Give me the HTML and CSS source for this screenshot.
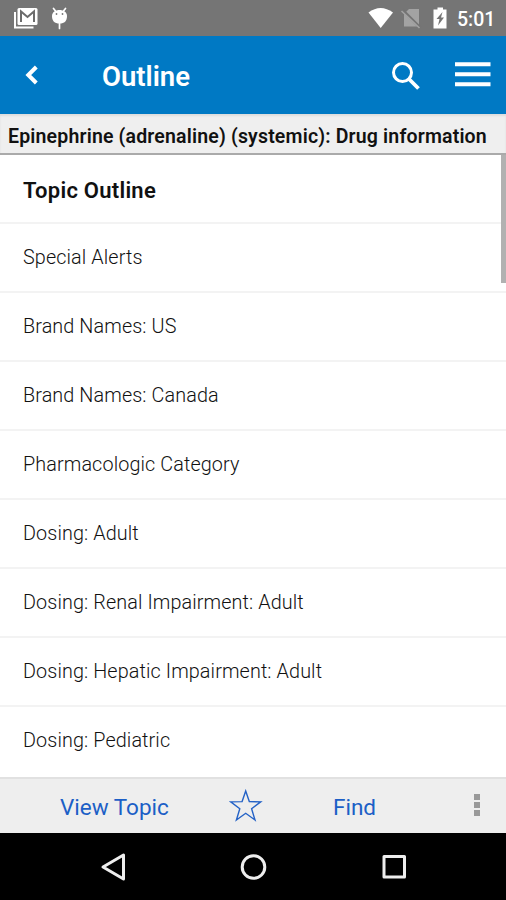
FILE: index.html
```html
<!DOCTYPE html>
<html lang="en">
<head>
<meta charset="utf-8">
<title>Outline</title>
<link rel="stylesheet" href="styles.css">
</head>
<body>
<div class="screen">
  <div class="status">
    <svg class="status-left" width="60" height="36" viewBox="0 0 60 36">
      <path d="M1 12v15.500h18.500" fill="none" stroke="#fff" stroke-width="2"/>
      <rect x="3.500" y="8" width="20" height="17" rx="1.500" fill="#fff"/>
      <path d="M7 22V11.500l6.500 5.500 6.500-5.500V22" fill="none" stroke="#6c6c6c" stroke-width="2"/>
      <path d="M39.500 8.500l2 2.500M51.500 8.500l-2 2.500M45.500 23v5.500" stroke="#fff" stroke-width="1.700" stroke-linecap="round"/>
      <path d="M38 16c0-8 15-8 15 0 0 5-2.500 7.500-7.500 7.500s-7.500-2.500-7.500-7.500z" fill="#fff"/>
      <circle cx="42.500" cy="14" r=".9" fill="#777"/><circle cx="48.500" cy="14" r=".9" fill="#777"/>
    </svg>
    <svg class="status-right" width="86" height="36" viewBox="0 0 86 36">
      <path d="M1.500 12.500Q13.500 3.500 26 12.500L13.700 28z" fill="#fff"/>
      <path d="M42 9h10v17.500H37V14z" fill="#a3a3a3"/>
      <path d="M35 9.500l18.500 18.500" stroke="#747474" stroke-width="3"/>
      <path d="M34.500 11l18 17" stroke="#a3a3a3" stroke-width="1.600"/>
      <path d="M70.500 7.500h5.500v2h3.500v19h-13v-19h4z" fill="#fff"/>
      <path d="M75.500 12l-6 7h3l-1.500 6.500 6-8h-3z" fill="#747474"/>
    </svg>
    <span class="clock">5:01</span>
  </div>
  <header class="appbar">
    <svg class="back" width="14" height="20" viewBox="0 0 14 20"><path d="M12.300 2L4.300 10l8 8" fill="none" stroke="#fff" stroke-width="4"/></svg>
    <h1>Outline</h1>
    <svg class="search" width="30" height="30" viewBox="0 0 30 30"><circle cx="11.500" cy="11.500" r="9" fill="none" stroke="#fff" stroke-width="3"/><path d="M18 18l9.500 9.500" stroke="#fff" stroke-width="3.800"/></svg>
    <svg class="menu" width="36" height="26" viewBox="0 0 36 26"><path d="M0 3.300h35.500M0 13.300h35.500M0 23.300h35.500" stroke="#fff" stroke-width="4"/></svg>
  </header>
  <div class="topic"><span>Epinephrine (adrenaline) (systemic): Drug information</span></div>
  <main class="list">
    <h2 class="row heading"><span>Topic Outline</span></h2>
    <div class="row"><span>Special Alerts</span></div>
    <div class="row"><span>Brand Names: US</span></div>
    <div class="row"><span>Brand Names: Canada</span></div>
    <div class="row"><span>Pharmacologic Category</span></div>
    <div class="row"><span>Dosing: Adult</span></div>
    <div class="row"><span>Dosing: Renal Impairment: Adult</span></div>
    <div class="row"><span>Dosing: Hepatic Impairment: Adult</span></div>
    <div class="row"><span>Dosing: Pediatric</span></div>
    <div class="scrollbar"></div>
  </main>
  <footer class="toolbar">
    <span class="view">View Topic</span>
    <svg class="star" width="34" height="34" viewBox="0 0 34 34"><path d="M16.700 2l3.600 10.600 11.400.2-9.100 6.900 3.400 11.300-9.300-6.700-9.300 6.700 3.400-11.300L1.700 12.800l11.400-.2z" fill="none" stroke="#2462c6" stroke-width="1.400"/></svg>
    <span class="find">Find</span>
    <svg class="more" width="6" height="22" viewBox="0 0 6 22"><path d="M0 0h6v6H0zM0 8h6v6H0zM0 16h6v6H0z" fill="#999"/></svg>
  </footer>
  <nav class="nav">
    <svg width="506" height="67" viewBox="0 0 506 67" fill="none" stroke="#eee" stroke-width="3" stroke-linejoin="round">
      <path d="M103 34l20.500-12v24z"/>
      <circle cx="253.500" cy="34" r="11.300"/>
      <rect x="384" y="23.500" width="20.500" height="20.500"/>
    </svg>
  </nav>
</div>
</body>
</html>
```
FILE: styles.css
```css
* { box-sizing: border-box; }
body { margin: 0; font-family: Roboto, "Liberation Sans", sans-serif; }
svg { display: block; flex: none; }
span, h1 { white-space: nowrap; }
.screen { width: 506px; height: 900px; display: flex; flex-direction: column; overflow: hidden; background: #fff; }
.status { height: 36px; flex: none; display: flex; align-items: center; background: #757575; color: #fff; }
.status-left { margin-left: 14px; }
.status-right { margin-left: 293px; }
.clock { margin-left: 4px; font-size: 19.5px; font-weight: 500; line-height: 36px; padding-top: 3px; }
.appbar { height: 78px; flex: none; display: flex; align-items: center; background: #0079c4; color: #fff; }
.back { margin-left: 24px; }
.appbar h1 { width: 288px; margin: 4px 0 0 64px; font-size: 27.5px; line-height: 34px; font-weight: 600; }
.search { margin: 2px 0 0 1px; }
.menu { margin: 0 0 2px 34px; }
.topic { height: 41px; flex: none; padding: 5px 0 0 8px; display: flex; align-items: center; background: #efefef; border-bottom: 2px solid #aaa; box-shadow: inset 0 2px 2px #ddd; color: #111; font-size: 19.5px; font-weight: 600; letter-spacing: 0.17px; }
.list { position: relative; height: 622px; flex: none; overflow: hidden; }
.row { height: 69px; padding: 0 0 0 23px; display: flex; align-items: center; border-bottom: 2px solid #f3f3f3; color: #111; font-size: 19.8px; font-weight: 300; letter-spacing: 0.11px; }
.heading { height: 69px; margin: 0; padding: 4px 0 0 23px; color: #111; font-size: 22px; font-weight: 600; letter-spacing: 0.25px; }
.row:nth-child(9) { border-bottom-color: transparent; }
.scrollbar { position: absolute; right: 0; top: -1px; width: 5px; height: 129px; background: #b1b1b1; }
.toolbar { height: 56px; flex: none; display: flex; align-items: center; background: #eee; border-top: 2px solid #e1e1e1; color: #1c5fc6; font-size: 22.5px; }
.view { width: 169px; margin: 2px 0 0 60px; }
.find { width: 85px; margin: 2px 0 0 70px; }
.more { margin: -2px 0 0 56px; }
.nav { height: 67px; flex: none; background: #000; }
```
